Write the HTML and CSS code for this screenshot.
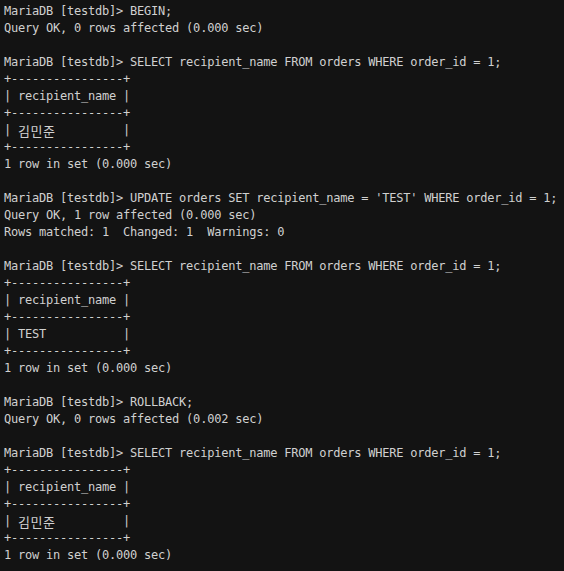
FILE: index.html
```html
<!DOCTYPE html>
<html lang="ko">
<head>
<meta charset="utf-8">
<title>MariaDB terminal</title>
<link rel="stylesheet" href="styles.css">
</head>
<body>
<pre class="term">MariaDB [testdb]&gt; BEGIN;
Query OK, 0 rows affected (0.000 sec)

MariaDB [testdb]&gt; SELECT recipient_name FROM orders WHERE order_id = 1;
+----------------+
| recipient_name |
+----------------+
| <span class="ko">김민준</span>         |
+----------------+
1 row in set (0.000 sec)

MariaDB [testdb]&gt; UPDATE orders SET recipient_name = 'TEST' WHERE order_id = 1;
Query OK, 1 row affected (0.000 sec)
Rows matched: 1  Changed: 1  Warnings: 0

MariaDB [testdb]&gt; SELECT recipient_name FROM orders WHERE order_id = 1;
+----------------+
| recipient_name |
+----------------+
| TEST           |
+----------------+
1 row in set (0.000 sec)

MariaDB [testdb]&gt; ROLLBACK;
Query OK, 0 rows affected (0.002 sec)

MariaDB [testdb]&gt; SELECT recipient_name FROM orders WHERE order_id = 1;
+----------------+
| recipient_name |
+----------------+
| <span class="ko">김민준</span>         |
+----------------+
1 row in set (0.000 sec)</pre>
</body>
</html>
```
FILE: styles.css
```css
html, body {
  margin: 0;
  padding: 0;
  background: #131313;
  height: 100%;
  overflow: hidden;
}
.term {
  margin: 0;
  padding: 3px 4px;
  color: #d0d0d0;
  font-family: "DejaVu Sans Mono", "Liberation Mono", "Noto Sans CJK KR", monospace;
  font-size: 12px;
  letter-spacing: -0.22px;
  line-height: 17px;
  white-space: pre;
}
.ko {
  display: inline-block;
  width: 42px;
  font-family: "Noto Sans CJK KR", sans-serif;
  font-size: 13px;
  line-height: 17px;
  vertical-align: top;
  letter-spacing: 0.5px;
}
```
